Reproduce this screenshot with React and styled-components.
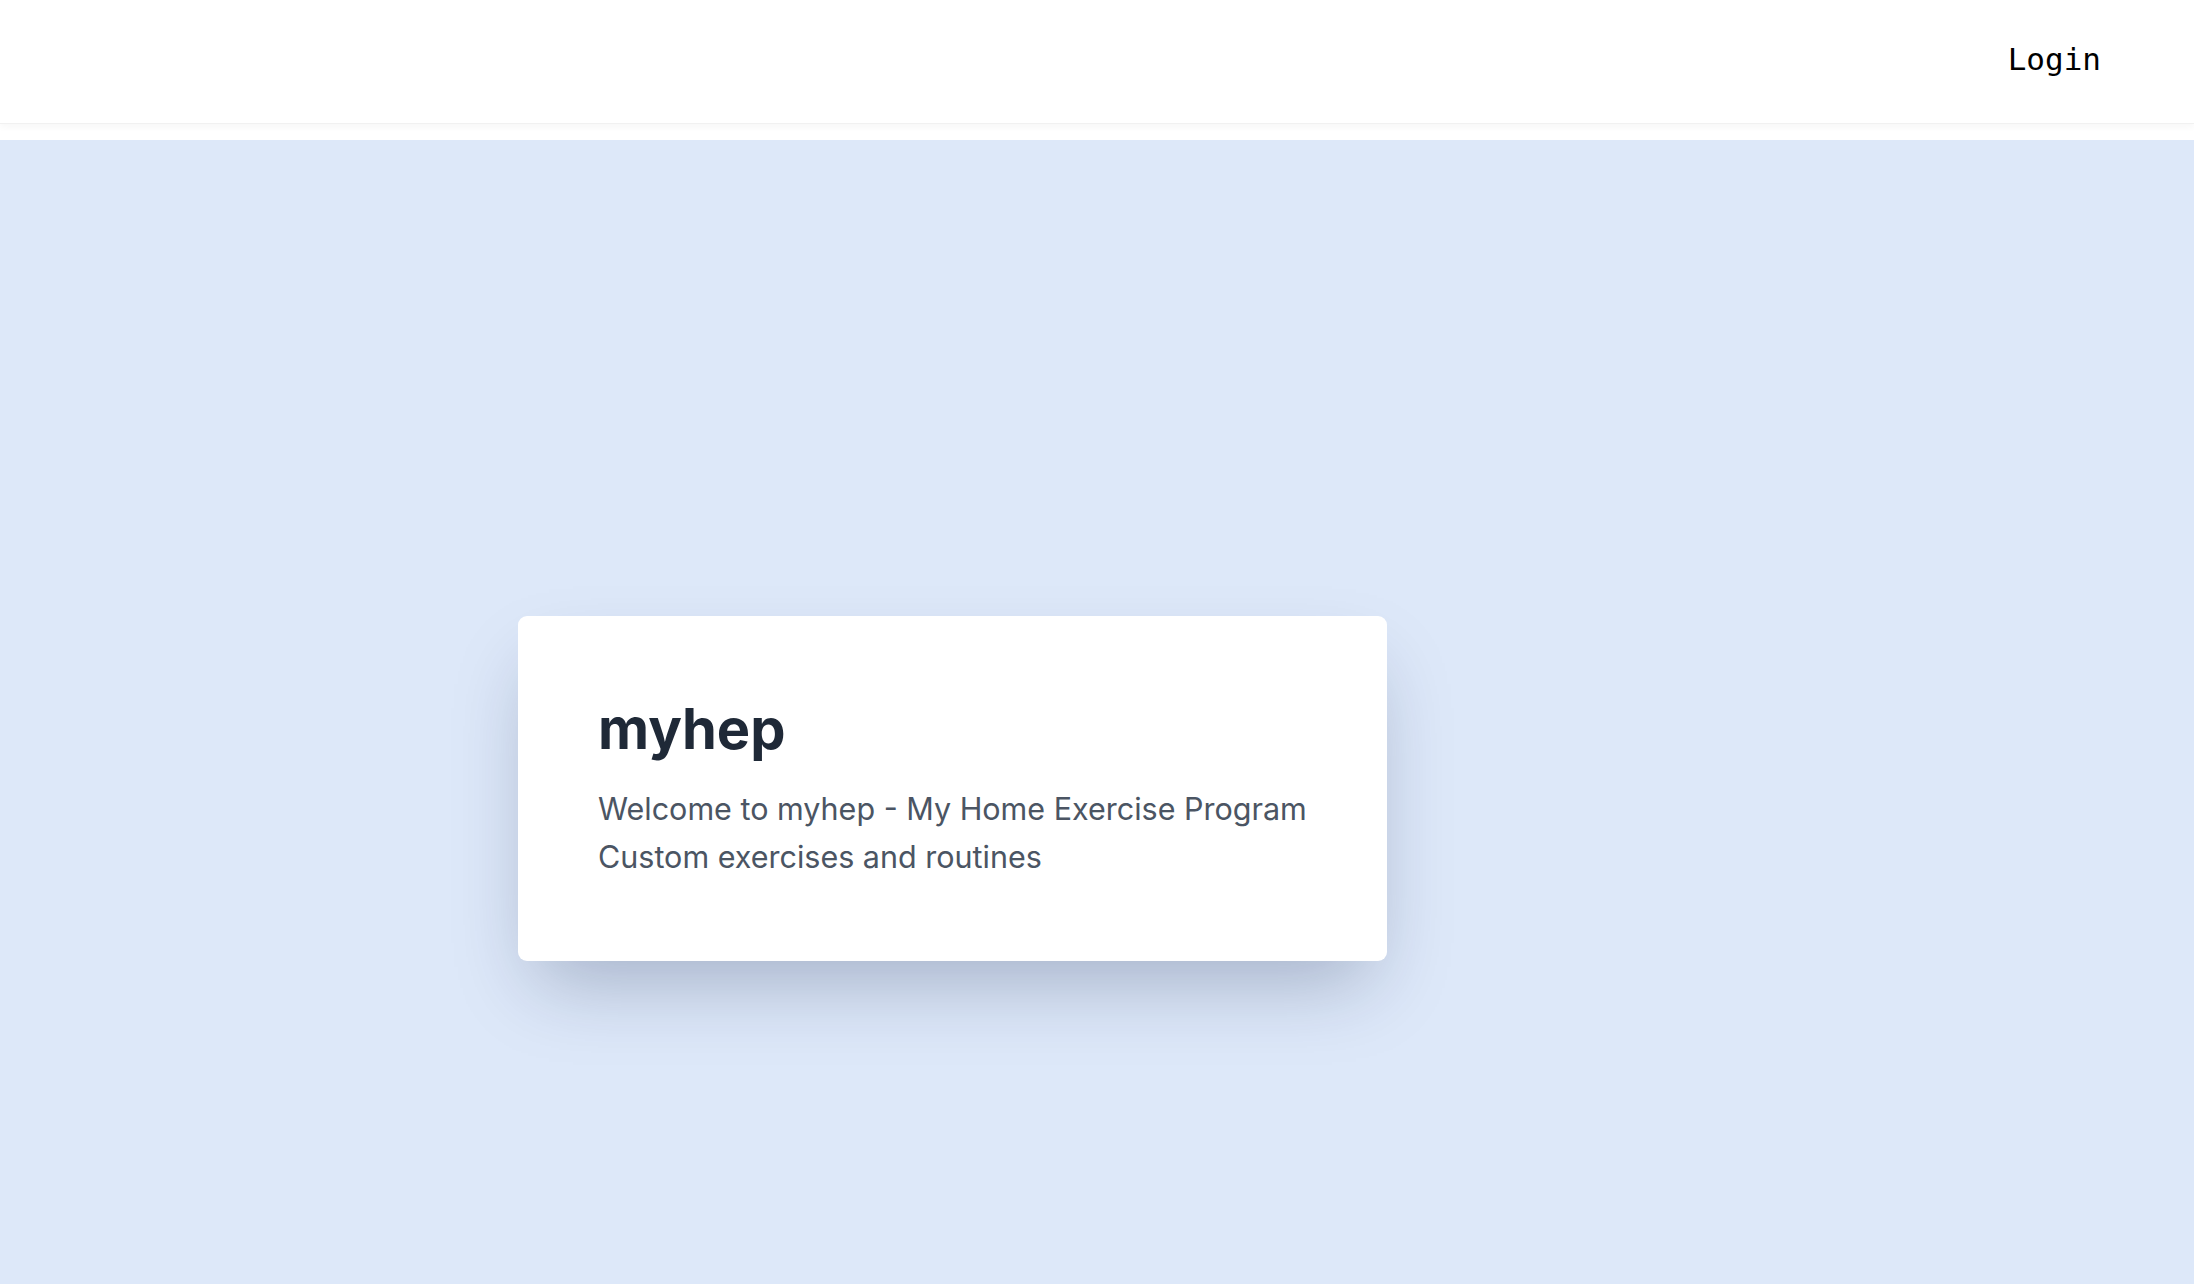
import React from 'react'
import styled, { createGlobalStyle } from 'styled-components'

const GlobalStyle = createGlobalStyle`
    html, body {
        margin: 0;
        padding: 0;
        background: #ffffff;
        overflow: hidden;
    }
    * {
        box-sizing: border-box;
    }
`

const Header = styled.header`
    height: 124px;
    display: flex;
    align-items: center;
    justify-content: flex-end;
    padding: 0 93px 6px 0;
    background: #ffffff;
    border-bottom: 1px solid #f1f1f1;
    box-shadow: 0 3px 7px rgba(0, 0, 0, 0.035);
    margin-bottom: 16px;
`

const LoginButton = styled.button`
    border: none;
    background: none;
    padding: 0;
    cursor: pointer;
    font-family: "DejaVu Sans Mono", "Liberation Mono", monospace;
    font-size: 31px;
    line-height: 36px;
    color: #000000;
`

const Main = styled.main`
    height: 1144px;
    background: #dde8f9;
    display: flex;
    align-items: flex-start;
    padding-top: 476px;
    padding-left: 518px;
`

const Card = styled.section`
    width: fit-content;
    padding: 80px;
    background: #ffffff;
    border-radius: 9px;
    box-shadow: 0 37px 75px -18px rgba(15, 30, 70, 0.28);
    font-family: Inter, "Noto Sans", sans-serif;
`

const Title = styled.h1`
    margin: 0 0 22px 0;
    font-size: 56px;
    line-height: 67px;
    font-weight: 700;
    letter-spacing: 0;
    color: #1f2937;
`

const Tagline = styled.p`
    margin: 0;
    font-size: 30.5px;
    line-height: 48px;
    font-weight: 400;
    color: #4b5563;
    white-space: nowrap;
`

const App = () => {
    return (
        <>
            <GlobalStyle />
            <Header>
                <LoginButton type="button">Login</LoginButton>
            </Header>
            <Main>
                <Card>
                    <Title>myhep</Title>
                    <Tagline>Welcome to myhep - My Home Exercise Program</Tagline>
                    <Tagline>Custom exercises and routines</Tagline>
                </Card>
            </Main>
        </>
    )
}

export default App
